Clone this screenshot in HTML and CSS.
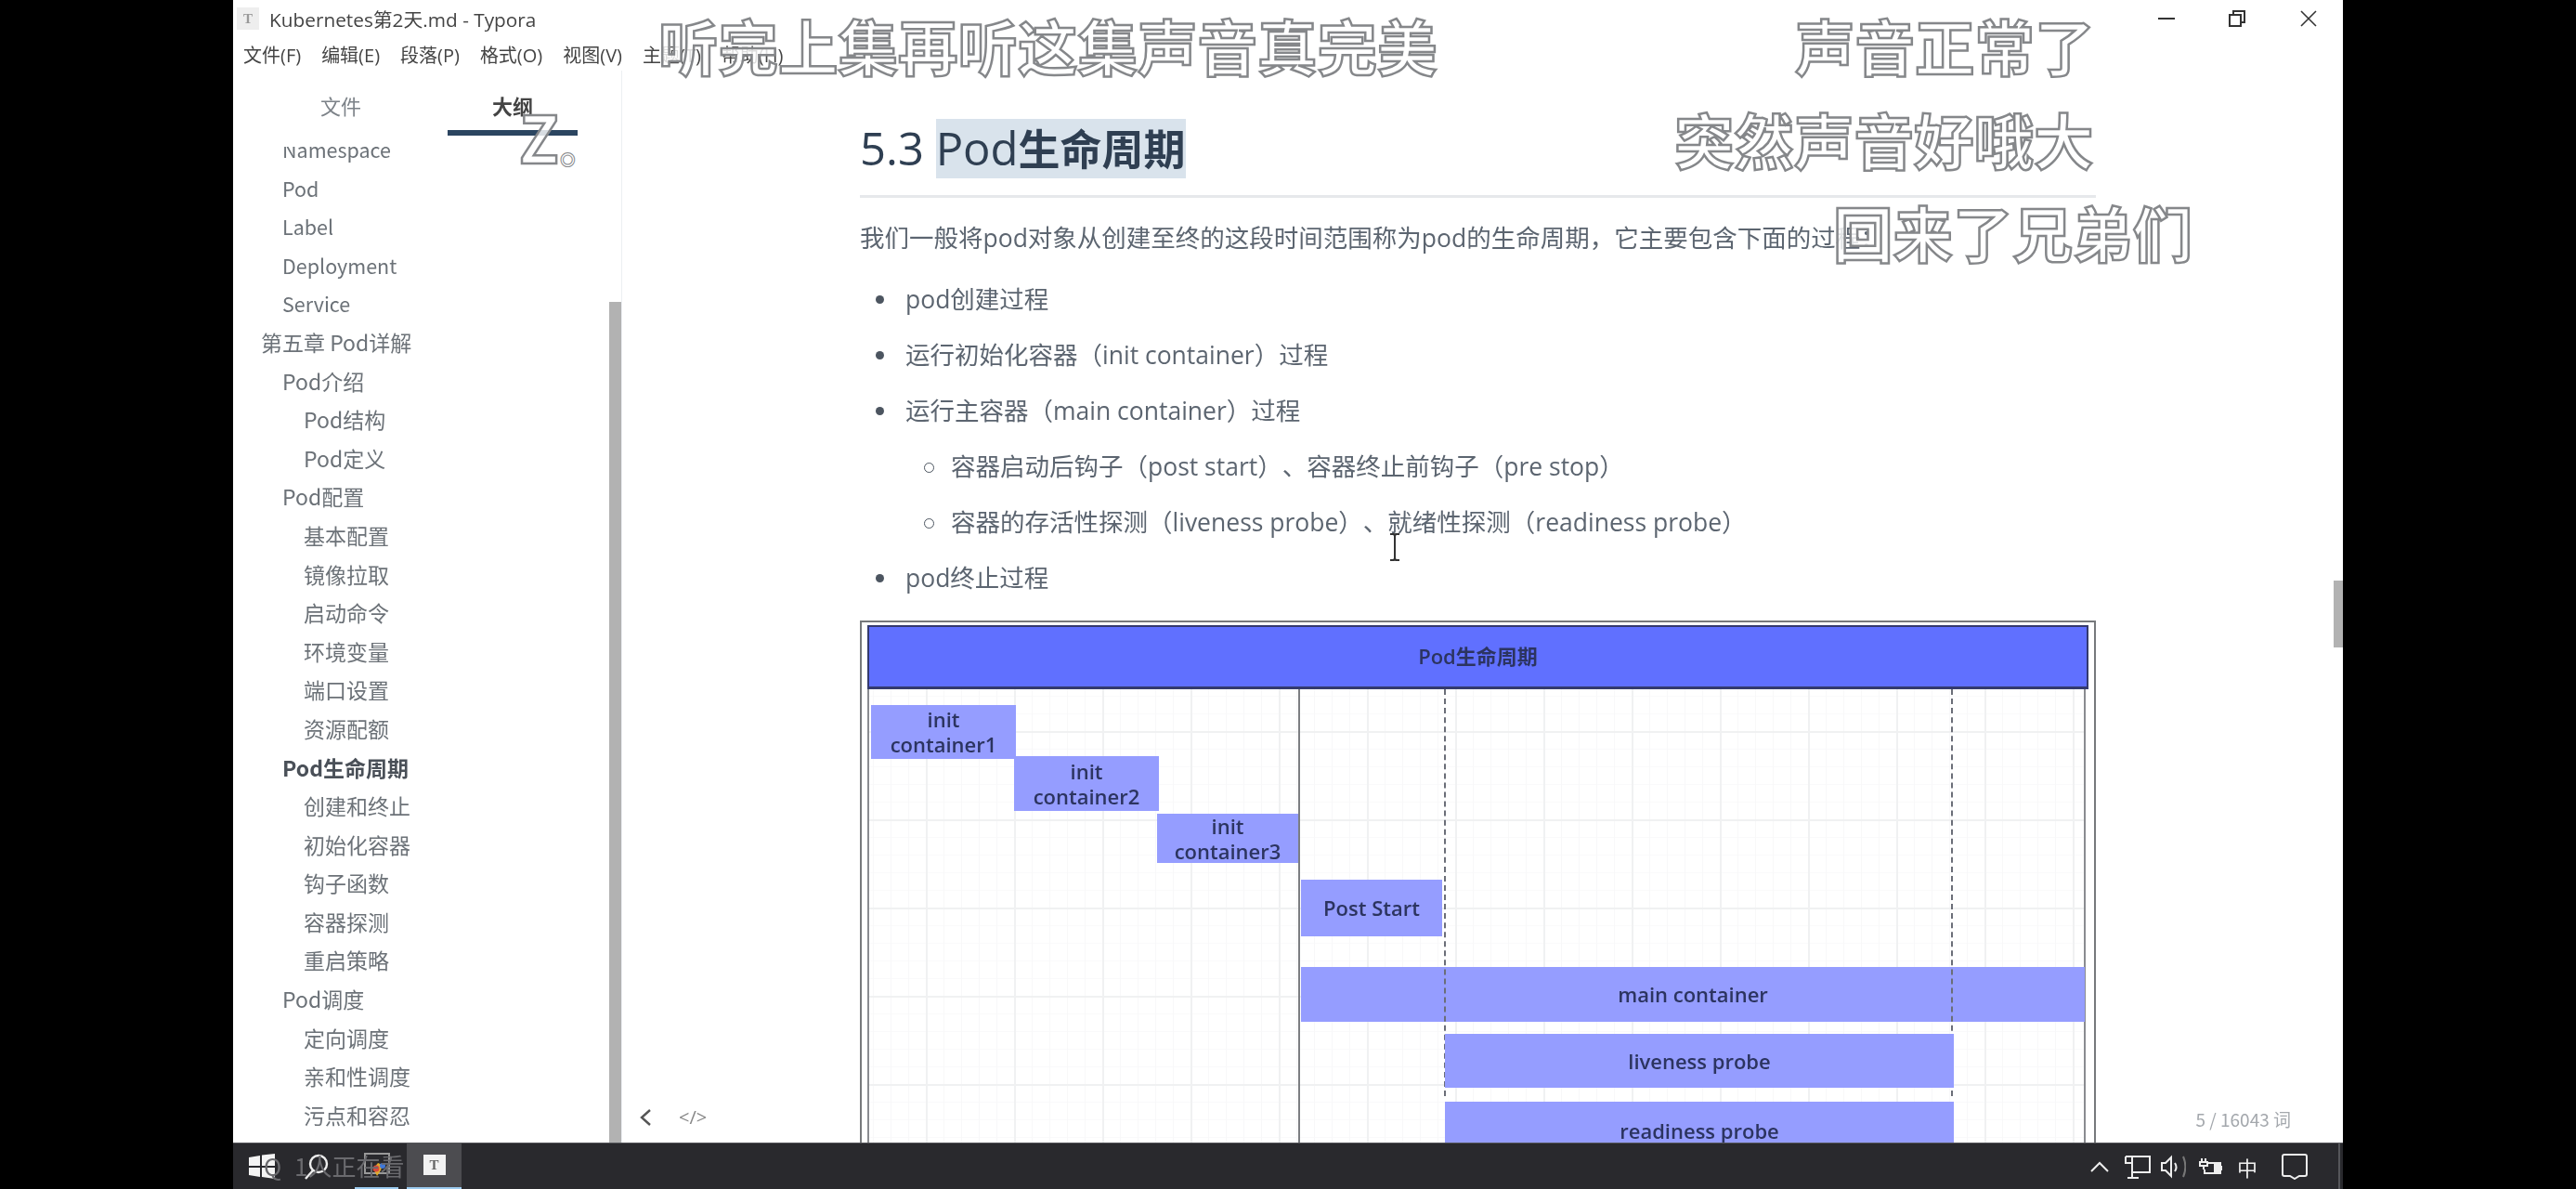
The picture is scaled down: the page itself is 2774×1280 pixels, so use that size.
FILE: index.html
```html
<!DOCTYPE html>
<html lang="zh-CN">
<head>
  <meta charset="UTF-8" />
  <title>Kubernetes第2天.md - Typora</title>
  <link rel="stylesheet" href="styles.css">
</head>
<body>
  <div class="app">
    <header class="titlebar">
      <span class="app-icon">T</span>
      <span class="title">Kubernetes第2天.md - Typora</span>
      <div class="win-controls">
        <svg class="win-min" width="18" height="4" viewBox="0 0 18 4"><path d="M0 2h18" stroke="#333" stroke-width="2"/></svg>
        <svg class="win-max" width="20" height="18" viewBox="0 0 20 18" fill="none" stroke="#333" stroke-width="2"><path d="M2 5h12v12H2zM6 5V1h12v12h-4"/></svg>
        <svg class="win-close" width="20" height="18" viewBox="0 0 20 18" fill="none" stroke="#333" stroke-width="1.6"><path d="M2 1l16 16M18 1L2 17"/></svg>
      </div>
    </header>
    <nav class="menubar">
      <span>文件(F)</span>
      <span>编辑(E)</span>
      <span>段落(P)</span>
      <span>格式(O)</span>
      <span>视图(V)</span>
      <span>主题(T)</span>
      <span>帮助(H)</span>
    </nav>

    <div class="workspace">
      <aside class="sidebar">
        <div class="side-content">
          <div class="tabs">
            <div class="tab">文件</div>
            <div class="tab active">大纲</div>
          </div>
          <div class="outline-wrap">
            <ul class="outline">
              <li class="l2 en">Namespace</li>
              <li class="l2 en">Pod</li>
              <li class="l2 en">Label</li>
              <li class="l2 en">Deployment</li>
              <li class="l2 en">Service</li>
              <li class="l1">第五章 Pod详解</li>
              <li class="l2">Pod介绍</li>
              <li class="l3">Pod结构</li>
              <li class="l3">Pod定义</li>
              <li class="l2">Pod配置</li>
              <li class="l3">基本配置</li>
              <li class="l3">镜像拉取</li>
              <li class="l3">启动命令</li>
              <li class="l3">环境变量</li>
              <li class="l3">端口设置</li>
              <li class="l3">资源配额</li>
              <li class="l2 current">Pod生命周期</li>
              <li class="l3">创建和终止</li>
              <li class="l3">初始化容器</li>
              <li class="l3">钩子函数</li>
              <li class="l3">容器探测</li>
              <li class="l3">重启策略</li>
              <li class="l2">Pod调度</li>
              <li class="l3">定向调度</li>
              <li class="l3">亲和性调度</li>
              <li class="l3">污点和容忍</li>
            </ul>
          </div>
        </div>
        <div class="side-thumb"></div>
      </aside>

      <main class="editor">
        <article class="doc">
          <h2><span class="num">5.3 </span><span class="sel"><span class="pod">Pod</span>生命周期</span></h2>
          <p>我们一般将pod对象从创建至终的这段时间范围称为pod的生命周期，它主要包含下面的过程：</p>
          <ul class="list">
            <li>pod创建过程</li>
            <li>运行初始化容器（init container）过程</li>
            <li>运行主容器（main container）过程
              <ul class="sublist">
                <li>容器启动后钩子（post start）、容器终止前钩子（pre stop）</li>
                <li>容器的存活性探测（liveness probe）、就绪性探测（readiness probe）</li>
              </ul>
            </li>
            <li>pod终止过程</li>
          </ul>

          <figure class="figure">
            <div class="fig-head">Pod生命周期</div>
            <div class="diagram">
              <div class="line solid"></div>
              <div class="bar b-init1">init<br>container1</div>
              <div class="bar b-init2">init<br>container2</div>
              <div class="bar b-init3">init<br>container3</div>
              <div class="bar b-post">Post Start</div>
              <div class="bar b-main">main container</div>
              <div class="line dashed d-left"></div>
              <div class="line dashed d-right"></div>
              <div class="bar b-live">liveness probe</div>
              <div class="bar b-ready">readiness probe</div>
            </div>
          </figure>
        </article>

        <div class="scroll-thumb"></div>
        <svg class="ibeam" width="14" height="30" viewBox="0 0 14 30" fill="none" stroke="#333" stroke-width="2"><path d="M2 1h4l1 2 1-2h4M7 3v24M2 29h4l1-2 1 2h4"/></svg>
        <div class="foot-left">
          <svg width="14" height="20" viewBox="0 0 14 20" fill="none" stroke="#555" stroke-width="2.4"><path d="M12 2L3 10l9 8"/></svg>
          <span class="code-btn">&lt;/&gt;</span>
        </div>
        <div class="word-count">5 / 16043 词</div>
      </main>
    </div>

    <footer class="taskbar">
      <svg class="ti-win" width="28" height="27" viewBox="0 0 28 27" fill="#f4f4f4"><path d="M0 4l12-2v11H0zM14 1.6L28 0v13H14zM0 15h12v10L0 23zM14 15h14v12l-14-2z"/></svg>
      <svg class="ti-search" width="26" height="28" viewBox="0 0 26 28" fill="none" stroke="#eee" stroke-width="2.4"><circle cx="15" cy="11" r="9"/><path d="M9 18L1 27"/></svg>
      <div class="ti-app">
        <svg width="28" height="28" viewBox="0 0 28 28"><rect x="1" y="2" width="26" height="21" fill="none" stroke="#999" stroke-width="2"/><path d="M10 18l5-6 5 2-2 6-4 6z" fill="#e0a92c"/><circle cx="13" cy="18" r="3.5" fill="#d8483c"/><circle cx="20" cy="15" r="3" fill="#3f78d8"/></svg>
      </div>
      <div class="ti-task"><span class="t-logo">T</span></div>

      <div class="tray">
        <svg width="20" height="12" viewBox="0 0 20 12" fill="none" stroke="#eee" stroke-width="2"><path d="M1 11l9-9 9 9"/></svg>
        <svg class="tr-net" width="28" height="26" viewBox="0 0 28 26" fill="none" stroke="#eee" stroke-width="2"><path d="M1 2h26v17H8M8 2v22M3 25h12M1 2v7h7"/></svg>
        <svg class="tr-vol" width="27" height="26" viewBox="0 0 27 26" fill="none" stroke="#eee" stroke-width="2"><path d="M1 9h4l6-6v20l-6-6H1z"/><path d="M15 9c2 3 2 6 0 9"/><path d="M24 2c3 7 3 15 0 22" stroke="#777"/></svg>
        <svg class="tr-bat" width="26" height="20" viewBox="0 0 26 20" fill="none" stroke="#eee" stroke-width="2"><path d="M3 1v4M7 1v4M1 5h8v4H1zM5 9v4"/><path d="M9 6h14v11H6v-4"/><path d="M24 9v5"/><path d="M17 7h5v9h-5z" fill="#eee"/></svg>
        <span class="tr-ime">中</span>
        <svg class="tr-note" width="28" height="28" viewBox="0 0 28 28" fill="none" stroke="#eee" stroke-width="2"><path d="M3 1h22a2 2 0 012 2v19a2 2 0 01-2 2h-6l-5 3-5-3H3a2 2 0 01-2-2V3a2 2 0 012-2z"/></svg>
      </div>
      <div class="task-edge"></div>
      <div class="viewers">Q 1人正在看</div>
    </footer>
  </div>

  <div class="cap cap-1">听完上集再听这集声音真完美</div>
  <div class="cap cap-2">声音正常了</div>
  <div class="cap cap-3">突然声音好哦大</div>
  <div class="cap cap-4">回来了兄弟们</div>
  <div class="cap cap-5">Z<span class="cap-dot">。</span></div>
</body>
</html>
```

FILE: styles.css
```css
* {
  box-sizing: border-box;
}
html, body {
  margin: 0;
  padding: 0;
}
body {
  position: relative;
  width: 2774px;
  height: 1280px;
  overflow: hidden;
  background: #000;
  font-family: "Open Sans", "Noto Sans CJK SC", sans-serif;
  color: #5c6570;
  text-spacing-trim: space-all;
}
ul {
  margin: 0;
  padding: 0;
  list-style: none;
}

.app {
  display: flex;
  flex-direction: column;
  width: 2272px;
  height: 1280px;
  margin-left: 251px;
  background: #fff;
  filter: blur(0.5px);
}

/* title + menu */
.titlebar {
  display: flex;
  align-items: center;
  height: 40px;
  flex: none;
  font-size: 20.8px;
  color: #444;
}
.app-icon {
  width: 24px;
  height: 24px;
  margin-left: 4px;
  background: #eee;
  color: #999;
  font: 700 15px/24px "Liberation Serif", serif;
  text-align: center;
}
.title {
  margin-left: 11px;
}
.win-controls {
  display: flex;
  align-items: center;
  gap: 57px;
  margin-left: auto;
  margin-right: 27px;
}
.menubar {
  display: flex;
  align-items: center;
  gap: 22px;
  height: 36px;
  flex: none;
  padding-left: 11px;
  font-size: 20px;
  color: #444;
}

.workspace {
  display: flex;
  flex: 1;
  min-height: 0;
}

/* sidebar */
.sidebar {
  display: flex;
  flex: none;
  width: 419px;
  border-right: 1px solid #eceff2;
}
.side-content {
  display: flex;
  flex-direction: column;
  flex: 1;
  min-width: 0;
}
.tabs {
  display: flex;
  flex: none;
  height: 82px;
  padding-left: 46px;
  gap: 45px;
}
.tab {
  width: 140px;
  height: 70px;
  padding-top: 23px;
  line-height: 30px;
  text-align: center;
  font-size: 22px;
  color: #7c8288;
}
.tab.active {
  font-weight: 700;
  color: #444;
  border-bottom: 6px solid #2b4560;
}
.outline-wrap {
  flex: 1;
  overflow: hidden;
}
.outline {
  margin-top: -18px;
  font-family: "Noto Sans CJK SC", sans-serif;
  font-size: 23px;
  line-height: 41.6px;
  color: #6c7278;
  white-space: nowrap;
}
.outline .en { font-size: 21.5px; }
.outline .l1 { padding-left: 30px; }
.outline .l2 { padding-left: 53px; }
.outline .l3 { padding-left: 76px; }
.outline .current {
  font-weight: 700;
  color: #4a5058;
}
.side-thumb {
  flex: none;
  width: 13px;
  margin-top: 249px;
  background: #b2b2b2;
}

/* editor */
.editor {
  position: relative;
  flex: 1;
  min-width: 0;
  overflow: hidden;
}
.doc {
  width: 1331px;
  margin-left: 256px;
}
h2 {
  margin: 0;
  padding: 52px 0 18px;
  border-bottom: 3px solid #e6e8eb;
  font-size: 45px;
  line-height: 62px;
  font-weight: 700;
  color: #2f3f52;
}
.num, .pod {
  font-size: 49px;
  font-weight: 400;
}
.sel {
  display: inline-block;
  background: #d9e3ec;
}
.doc p {
  margin: 25px 0 0;
  font-size: 26.5px;
  line-height: 36px;
  white-space: nowrap;
}
.list {
  margin-top: 30px;
  font-size: 26.5px;
  line-height: 36px;
}
.list > li {
  position: relative;
  margin-bottom: 24px;
  padding-left: 49px;
}
.list > li::before {
  content: "";
  position: absolute;
  left: 17px;
  top: 14px;
  width: 9px;
  height: 9px;
  border-radius: 50%;
  background: #4c5560;
}
.list > li:last-child {
  margin-bottom: 0;
}
.sublist {
  margin-top: 24px;
}
.sublist li {
  position: relative;
  margin-bottom: 24px;
  padding-left: 49px;
}
.sublist li:last-child {
  margin-bottom: 0;
}
.sublist li::before {
  content: "";
  position: absolute;
  left: 20px;
  top: 14px;
  width: 9px;
  height: 9px;
  border: 1.5px solid #4c5560;
  border-radius: 50%;
}

/* lifecycle picture */
.figure {
  height: 640px;
  margin: 28px 0 0;
  padding: 3px 6px 0;
  border: 2px solid #77797c;
  border-bottom: 0;
}
.fig-head {
  height: 69px;
  border: 2px solid #343a6e;
  border-bottom-width: 3px;
  background: #6070ff;
  color: #2c3460;
  font-size: 22px;
  font-weight: 600;
  line-height: 63px;
  text-align: center;
}
.diagram {
  position: relative;
  width: 1312px;
  height: 560px;
  border-left: 2px solid #8a8c90;
  border-right: 2px solid #8a8c90;
  background-color: #fff;
  background-image:
    linear-gradient(to right, #f0f1f2 2px, transparent 2px),
    linear-gradient(to bottom, #f0f1f2 2px, transparent 2px),
    linear-gradient(to right, #f8f8f9 1px, transparent 1px),
    linear-gradient(to bottom, #fafafb 1px, transparent 1px);
  background-size: 95px 95px, 95px 95px, 19px 19px, 19px 19px;
  background-position: 61px 45px, 61px 45px, 4px 7px, 4px 7px;
}
.bar {
  position: absolute;
  display: flex;
  align-items: center;
  justify-content: center;
  text-align: center;
  background: #959dff;
  color: #2c3460;
  font-size: 22px;
  font-weight: 600;
  line-height: 27px;
}
.b-init1 { left: 2px; top: 17px; width: 156px; height: 58px; }
.b-init2 { left: 156px; top: 72px; width: 156px; height: 59px; }
.b-init3 { left: 310px; top: 134px; width: 152px; height: 53px; }
.b-post { left: 465px; top: 205px; width: 152px; height: 61px; }
.b-main { left: 465px; top: 299px; width: 844px; height: 59px; }
.b-live { left: 620px; top: 371px; width: 548px; height: 58px; }
.b-ready { left: 620px; top: 444px; width: 548px; height: 70px; padding-bottom: 8px; }
.line {
  position: absolute;
  top: 0;
}
.solid {
  left: 462px;
  width: 2px;
  height: 560px;
  background: #7c7e82;
}
.dashed {
  width: 0;
  height: 438px;
  border-left: 2px dashed #6b6e78;
}
.d-left { left: 619px; }
.d-right { left: 1165px; }

/* things on top of the editor */
.scroll-thumb {
  position: absolute;
  top: 549px;
  right: 0;
  width: 10px;
  height: 72px;
  background: #b2b2b2;
}
.ibeam {
  position: absolute;
  left: 825px;
  top: 498px;
}
.foot-left {
  position: absolute;
  left: 18px;
  bottom: 14px;
  display: flex;
  align-items: center;
  gap: 29px;
  color: #888;
  font-size: 20px;
}
.word-count {
  position: absolute;
  right: 56px;
  bottom: 11px;
  font-family: "Noto Sans CJK SC", sans-serif;
  font-size: 19px;
  line-height: 28px;
  color: #a4a8ad;
}

/* taskbar */
.taskbar {
  position: relative;
  display: flex;
  align-items: center;
  flex: none;
  height: 50px;
  padding-left: 17px;
  background: #29292d;
  border-top: 1px solid #55565a;
}
.ti-search {
  margin-left: 32px;
}
.ti-app {
  display: flex;
  align-items: center;
  width: 47px;
  height: 50px;
  margin-left: 28px;
  padding-left: 10px;
  border-bottom: 3px solid #9ccbf0;
}
.ti-task {
  display: flex;
  align-items: center;
  justify-content: center;
  width: 59px;
  height: 50px;
  margin-left: 9px;
  background: #4c4c50;
  border-bottom: 3px solid #9ccbf0;
}
.t-logo {
  width: 24px;
  height: 22px;
  background: #f2f2f2;
  color: #666;
  font: 700 15px/22px "Liberation Serif", serif;
  text-align: center;
}
.tray {
  display: flex;
  align-items: center;
  margin-left: 1754px;
}
.tr-net { margin-left: 17px; }
.tr-vol { margin-left: 11px; }
.tr-bat { margin-left: 14px; }
.tr-ime {
  margin-left: 15px;
  color: #eee;
  font-size: 22px;
}
.tr-note { margin-left: 26px; }
.task-edge {
  position: absolute;
  right: 3px;
  top: 0;
  bottom: 0;
  width: 2px;
  background: #55565a;
}
.viewers {
  position: absolute;
  left: 33px;
  top: 8px;
  color: #6a6a6e;
  font-family: "Noto Sans CJK SC", sans-serif;
  font-size: 26px;
  line-height: 32px;
  word-spacing: 8px;
  white-space: nowrap;
}

/* video captions */
.cap {
  position: absolute;
  font-family: "Noto Sans CJK SC", sans-serif;
  font-size: 64.5px;
  font-weight: 700;
  line-height: 66px;
  white-space: nowrap;
  color: rgba(255, 255, 255, 0.82);
  -webkit-text-stroke: 2.5px #85878a;
}
.cap-1 { left: 709px; top: 15px; }
.cap-2 { left: 1933px; top: 15px; }
.cap-3 { left: 1803px; top: 116px; }
.cap-4 { left: 1974px; top: 216px; }
.cap-5 {
  left: 559px;
  top: 113px;
  font-size: 70px;
}
.cap-dot {
  font-size: 48px;
  font-weight: 400;
  -webkit-text-stroke: 1px #85878a;
}
```
